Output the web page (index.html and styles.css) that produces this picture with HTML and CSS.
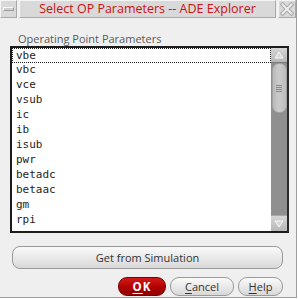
FILE: index.html
```html
<!DOCTYPE html>
<html>
<head>
<meta charset="utf-8">
<link rel="stylesheet" href="styles.css">
</head>
<body>
<div class="win">
  <div class="titlebar">
    <div class="tb-btn tb-menu"><span class="dash"></span></div>
    <div class="tb-title">Select OP Parameters -- ADE Explorer</div>
    <div class="tb-btn tb-close">
      <svg width="14" height="14" viewBox="0 0 14 14">
        <path d="M2.5 2.5 L11.5 11.5 M11.5 2.5 L2.5 11.5" stroke="#a8a8a8" stroke-width="4" stroke-linecap="square" fill="none"/>
        <path d="M2.5 2.5 L11.5 11.5 M11.5 2.5 L2.5 11.5" stroke="#ececec" stroke-width="2" stroke-linecap="square" fill="none"/>
      </svg>
    </div>
  </div>
  <div class="body">
    <div class="label">Operating Point Parameters</div>
    <div class="listbox">
      <div class="items">
        <div class="item focus">vbe</div>
        <div class="item">vbc</div>
        <div class="item">vce</div>
        <div class="item">vsub</div>
        <div class="item">ic</div>
        <div class="item">ib</div>
        <div class="item">isub</div>
        <div class="item">pwr</div>
        <div class="item">betadc</div>
        <div class="item">betaac</div>
        <div class="item">gm</div>
        <div class="item">rpi</div>
      </div>
      <div class="scrollbar">
        <div class="arrow up">
          <svg width="10" height="8" viewBox="0 0 10 8"><path d="M1 7 L5 1 L9 7 Z" fill="#d8d8d8" stroke="#f8f8f8" stroke-width="1"/></svg>
        </div>
        <div class="trough">
          <div class="thumb"><span class="grip"></span></div>
        </div>
        <div class="arrow down">
          <svg width="10" height="8" viewBox="0 0 10 8"><path d="M1 1 L5 7 L9 1 Z" fill="#d8d8d8" stroke="#f8f8f8" stroke-width="1"/></svg>
        </div>
      </div>
    </div>
    <div class="btn wide">Get from Simulation</div>
    <div class="actions">
      <div class="btn pill ok"><u>O</u>K</div>
      <div class="btn pill cancel"><u>C</u>ancel</div>
      <div class="btn pill help"><u>H</u>elp</div>
    </div>
  </div>
</div>
</body>
</html>
```

FILE: styles.css
```css
html, body {
  margin: 0;
  padding: 0;
  background: #ffffff;
}

.win {
  width: 296px;
  height: 297px;
  background: #efefef;
  border-right: 1px solid #9e9e9e;
  border-bottom: 1px solid #9e9e9e;
  display: flex;
  flex-direction: column;
  font-family: "Open Sans", "Liberation Sans", sans-serif;
}

.titlebar {
  height: 18px;
  display: flex;
  gap: 2px;
  padding: 0 0 1px 0;
}

.tb-btn, .tb-title {
  box-sizing: border-box;
  height: 18px;
  background: #d9d9d9;
  border-top: 1px solid #f4f4f4;
  border-left: 1px solid #f4f4f4;
  border-right: 1px solid #a9a9a9;
  border-bottom: 1px solid #a9a9a9;
}

.tb-menu {
  width: 17px;
  display: flex;
  align-items: center;
  justify-content: center;
}

.dash {
  width: 9px;
  height: 2px;
  background: #cfcfcf;
  border-top: 1px solid #f8f8f8;
  border-bottom: 1px solid #9c9c9c;
  border-left: 1px solid #f8f8f8;
  border-right: 1px solid #9c9c9c;
}

.tb-title {
  flex: 1;
  text-align: center;
  color: #cc1111;
  font-size: 12.5px;
  line-height: 16px;
  white-space: nowrap;
}

.tb-close {
  width: 18px;
  display: flex;
  align-items: center;
  justify-content: center;
}

.body {
  flex: 1;
  display: flex;
  flex-direction: column;
  padding: 12px 0 0 10px;
}

.label {
  font-size: 11px;
  line-height: 15px;
  color: #5a5a5a;
  padding-left: 8px;
}

.listbox {
  box-sizing: border-box;
  width: 279px;
  height: 187px;
  border: 2px solid #1c1c1c;
  border-right-color: #2a2a2a;
  background: #ffffff;
  display: flex;
}

.items {
  flex: 1;
  font-family: "DejaVu Sans Mono", "Liberation Mono", monospace;
  font-size: 11px;
  color: #1e1e1e;
}

.item {
  box-sizing: border-box;
  height: 15px;
  line-height: 14px;
  padding-left: 4px;
}

.item.focus {
  border: 1px dotted #222;
  padding-left: 3px;
  line-height: 13px;
}

.scrollbar {
  width: 16px;
  display: flex;
  flex-direction: column;
  background: #8f8f8f;
}

.arrow {
  height: 15px;
  display: flex;
  align-items: center;
  justify-content: center;
  background: linear-gradient(#d6d6d6, #b8b8b8);
  box-sizing: border-box;
  border-bottom: 1px solid #7a7a7a;
}

.arrow.down {
  height: 16px;
  border-bottom: none;
  border-top: 1px solid #a8a8a8;
}

.trough {
  flex: 1;
  display: flex;
  flex-direction: column;
  align-items: center;
  padding-top: 0;
}

.thumb {
  box-sizing: border-box;
  width: 15px;
  height: 50px;
  border-radius: 7px;
  background: linear-gradient(90deg, #b9b9b9, #cbcbcb 45%, #bdbdbd);
  border: 1px solid #a2a2a2;
  display: flex;
  align-items: center;
  justify-content: center;
}

.grip {
  width: 6px;
  height: 7px;
  background: repeating-linear-gradient(#8a8a8a 0 1px, transparent 1px 2px);
}

.btn {
  box-sizing: border-box;
  display: flex;
  align-items: center;
  justify-content: center;
  font-size: 11px;
  color: #333333;
  background: linear-gradient(#fafafa, #e6e6e6 60%, #d8d8d8);
  border: 1px solid #9a9a9a;
}

.btn u {
  text-decoration: underline;
  text-underline-offset: 2px;
}

.wide {
  margin-top: 13px;
  margin-left: 2px;
  width: 271px;
  height: 23px;
  border-radius: 8px;
}

.actions {
  margin-top: 8px;
  width: 273px;
  display: flex;
  justify-content: flex-end;
  gap: 4px;
}

.pill {
  height: 19px;
  border-radius: 9px;
}

.ok {
  width: 48px;
  background: linear-gradient(#d41a1a, #b00000 55%, #8e0000);
  border-color: #7a0000;
  color: #ffffff;
  font-weight: bold;
  font-size: 11.5px;
  letter-spacing: 1px;
}

.cancel {
  width: 64px;
}

.help {
  width: 45px;
}
```
